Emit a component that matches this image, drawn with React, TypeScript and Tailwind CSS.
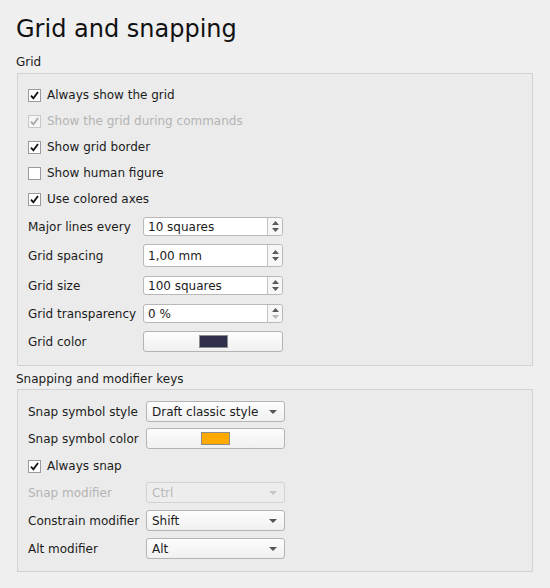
import React from 'react';

// small Qt-like widgets for the preferences page

const Check = ({ checked, disabled }: { checked: boolean; disabled?: boolean }) => (
  <span
    className={`w-[13px] h-[13px] border flex items-center justify-center shrink-0 ${
      disabled ? 'border-[#c8c8c8] bg-[#f4f4f4]' : 'border-[#9a9a9a] bg-white'
    }`}
  >
    {checked && (
      <svg width="9" height="9" viewBox="0 0 9 9">
        <path
          d="M1 4.6 L3.4 7.4 L8 1"
          fill="none"
          stroke={disabled ? '#a8a8a8' : '#111'}
          strokeWidth="1.8"
        />
      </svg>
    )}
  </span>
);

const CheckRow = ({ label, checked, disabled }: { label: string; checked: boolean; disabled?: boolean }) => (
  <div className="h-[26px] flex items-center gap-[6px]">
    <Check checked={checked} disabled={disabled} />
    <span className={disabled ? 'text-[#b4b4b4]' : 'text-[#1b1b1b]'}>{label}</span>
  </div>
);

const Spin = ({ value, h, downOff }: { value: string; h: string; downOff?: boolean }) => (
  <div className={`w-[140px] ${h} flex bg-white border border-[#b8b8b8] rounded-[3px]`}>
    <span className="flex-1 flex items-center pl-[4px] text-[#1b1b1b]">{value}</span>
    <span className="w-[15px] border-l border-[#c4c4c4] bg-[#f6f6f6] rounded-r-[3px] flex flex-col items-center justify-center gap-[3px]">
      <svg width="7" height="4" viewBox="0 0 7 4">
        <path d="M0 4 L3.5 0 L7 4 Z" fill="#5a5a5a" />
      </svg>
      <svg width="7" height="4" viewBox="0 0 7 4">
        <path d="M0 0 L3.5 4 L7 0 Z" fill={downOff ? '#b8b8b8' : '#5a5a5a'} />
      </svg>
    </span>
  </div>
);

const ColorButton = ({ color, w }: { color: string; w: string }) => (
  <div
    className={`${w} h-[21px] flex items-center justify-center border border-[#b4b4b4] rounded-[3px] bg-gradient-to-b from-[#fdfdfd] to-[#f0f0f0]`}
  >
    <span className="w-[29px] h-[13px] border border-[#8c8c8c]" style={{ background: color }} />
  </div>
);

const Combo = ({ value, disabled }: { value: string; disabled?: boolean }) => (
  <div
    className={`w-[139px] h-[21px] flex items-center justify-between pl-[5px] pr-[7px] border rounded-[3px] ${
      disabled
        ? 'border-[#d2d2d2] bg-[#ededed] text-[#b8b8b8]'
        : 'border-[#b4b4b4] bg-gradient-to-b from-[#fdfdfd] to-[#f0f0f0] text-[#1b1b1b]'
    }`}
  >
    <span>{value}</span>
    <svg width="8" height="4" viewBox="0 0 8 4">
      <path d="M0 0 L4 4 L8 0 Z" fill={disabled ? '#c4c4c4' : '#555'} />
    </svg>
  </div>
);

const FormRow = ({ label, labelW, mt, children, disabled }: { label: string; labelW: string; mt: string; children: React.ReactNode; disabled?: boolean }) => (
  <div className={`flex items-center ${mt}`}>
    <span className={`${labelW} shrink-0 ${disabled ? 'text-[#b4b4b4]' : 'text-[#1b1b1b]'}`}>{label}</span>
    {children}
  </div>
);

export default function App() {
  return (
    <div
      className="w-[550px] h-[588px] bg-[#efefef] pl-[16px] pr-[17px] pt-[15px] text-[12px] leading-[14px]"
      style={{ fontFamily: '"DejaVu Sans", sans-serif' }}
    >
      <h1 className="text-[24px] leading-[28px] text-[#111]">Grid and snapping</h1>

      {/* Grid */}
      <div className="mt-[12px] text-[#1b1b1b]">Grid</div>
      <div className="mt-[4px] ml-[1px] border border-[#d2d2d2] bg-[#ebebeb] pt-[8px] pb-[13px] pl-[10px]">
        <CheckRow label="Always show the grid" checked />
        <CheckRow label="Show the grid during commands" checked disabled />
        <CheckRow label="Show grid border" checked />
        <CheckRow label="Show human figure" checked={false} />
        <CheckRow label="Use colored axes" checked />
        <FormRow label="Major lines every" labelW="w-[115px]" mt="mt-[5px]">
          <Spin value="10 squares" h="h-[19px]" />
        </FormRow>
        <FormRow label="Grid spacing" labelW="w-[115px]" mt="mt-[8px]">
          <Spin value="1,00 mm" h="h-[23px]" />
        </FormRow>
        <FormRow label="Grid size" labelW="w-[115px]" mt="mt-[9px]">
          <Spin value="100 squares" h="h-[19px]" />
        </FormRow>
        <FormRow label="Grid transparency" labelW="w-[115px]" mt="mt-[9px]">
          <Spin value="0 %" h="h-[19px]" downOff />
        </FormRow>
        <FormRow label="Grid color" labelW="w-[115px]" mt="mt-[8px]">
          <ColorButton color="#2f2f4b" w="w-[140px]" />
        </FormRow>
      </div>

      {/* Snapping */}
      <div className="mt-[6px] text-[#1b1b1b]">Snapping and modifier keys</div>
      <div className="mt-[3px] ml-[1px] border border-[#d2d2d2] bg-[#ebebeb] pt-[11px] pb-[12px] pl-[10px]">
        <FormRow label="Snap symbol style" labelW="w-[118px]" mt="mt-0">
          <Combo value="Draft classic style" />
        </FormRow>
        <FormRow label="Snap symbol color" labelW="w-[118px]" mt="mt-[6px]">
          <ColorButton color="#ffaa00" w="w-[139px]" />
        </FormRow>
        <div className="mt-[4px]">
          <CheckRow label="Always snap" checked />
        </div>
        <FormRow label="Snap modifier" labelW="w-[118px]" mt="mt-[3px]" disabled>
          <Combo value="Ctrl" disabled />
        </FormRow>
        <FormRow label="Constrain modifier" labelW="w-[118px]" mt="mt-[7px]">
          <Combo value="Shift" />
        </FormRow>
        <FormRow label="Alt modifier" labelW="w-[118px]" mt="mt-[7px]">
          <Combo value="Alt" />
        </FormRow>
      </div>
    </div>
  );
}
